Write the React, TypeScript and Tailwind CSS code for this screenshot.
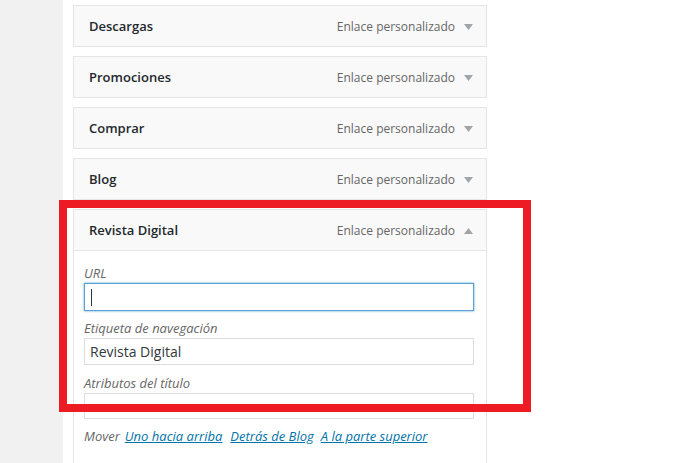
import React from 'react';

const items = ['Descargas', 'Promociones', 'Comprar', 'Blog'];

const Arrow = ({ up = false }: { up?: boolean }) => (
  <svg width="9" height="6" viewBox="0 0 9 6" className="shrink-0">
    {up ? <path d="M0 6 L4.5 0 L9 6 Z" fill="#a0a5aa" /> : <path d="M0 0 L9 0 L4.5 6 Z" fill="#a0a5aa" />}
  </svg>
);

const ItemHeader = ({ title, up = false }: { title: string; up?: boolean }) => (
  <div className="flex h-[42px] items-center border border-[#e5e5e5] bg-[#f9f9f9] pt-px pl-[15px] pr-[13px]">
    <span className="flex-1 text-[13px] font-semibold text-[#23282d]">{title}</span>
    <span className="mr-[9px] text-[12px] text-[#666]">Enlace personalizado</span>
    <Arrow up={up} />
  </div>
);

export default function App() {
  return (
    <div className="relative flex h-[463px] w-[690px] overflow-hidden bg-white font-['Open_Sans','Liberation_Sans',sans-serif]">
      <div className="w-[63px] shrink-0 bg-[#f1f1f1]" />
      <div className="ml-[10px] flex w-[414px] flex-col gap-[9px] pt-[5px]">
        {items.map((t) => (
          <ItemHeader key={t} title={t} />
        ))}
        <div className="flex flex-1 flex-col">
          <ItemHeader title="Revista Digital" up />
          <div className="flex-1 border-x border-[#e5e5e5] px-[10px] pt-[12px]">
            <label className="block text-[13px] leading-[20px] italic text-[#666]">URL</label>
            <div className="flex h-[28px] w-[390px] items-center border border-[#5b9dd9] px-[6px] shadow-[0_0_2px_rgba(30,140,190,0.8)]">
              <span className="h-[17px] w-px bg-[#32373c]" />
            </div>
            <label className="mt-[7px] block text-[13px] leading-[20px] italic text-[#666]">Etiqueta de navegación</label>
            <div className="flex h-[27px] w-[390px] items-center border border-[#ddd] px-[5px] text-[14px] text-[#32373c]">
              Revista Digital
            </div>
            <label className="mt-[8px] block text-[13px] leading-[20px] italic text-[#666]">Atributos del título</label>
            <div className="h-[26px] w-[390px] border border-[#ddd]" />
            <div className="mt-[7px] flex text-[13px] leading-[20px] italic">
              <span className="mr-[5px] text-[#666]">Mover</span>
              <a className="mr-[8px] text-[#0073aa] underline">Uno hacia arriba</a>
              <a className="mr-[7px] text-[#0073aa] underline">Detrás de Blog</a>
              <a className="text-[#0073aa] underline">A la parte superior</a>
            </div>
          </div>
        </div>
      </div>
      <div className="pointer-events-none absolute left-[59px] top-[200px] h-[212px] w-[472px] border-[8px] border-[#ed1c24]" />
    </div>
  );
}
